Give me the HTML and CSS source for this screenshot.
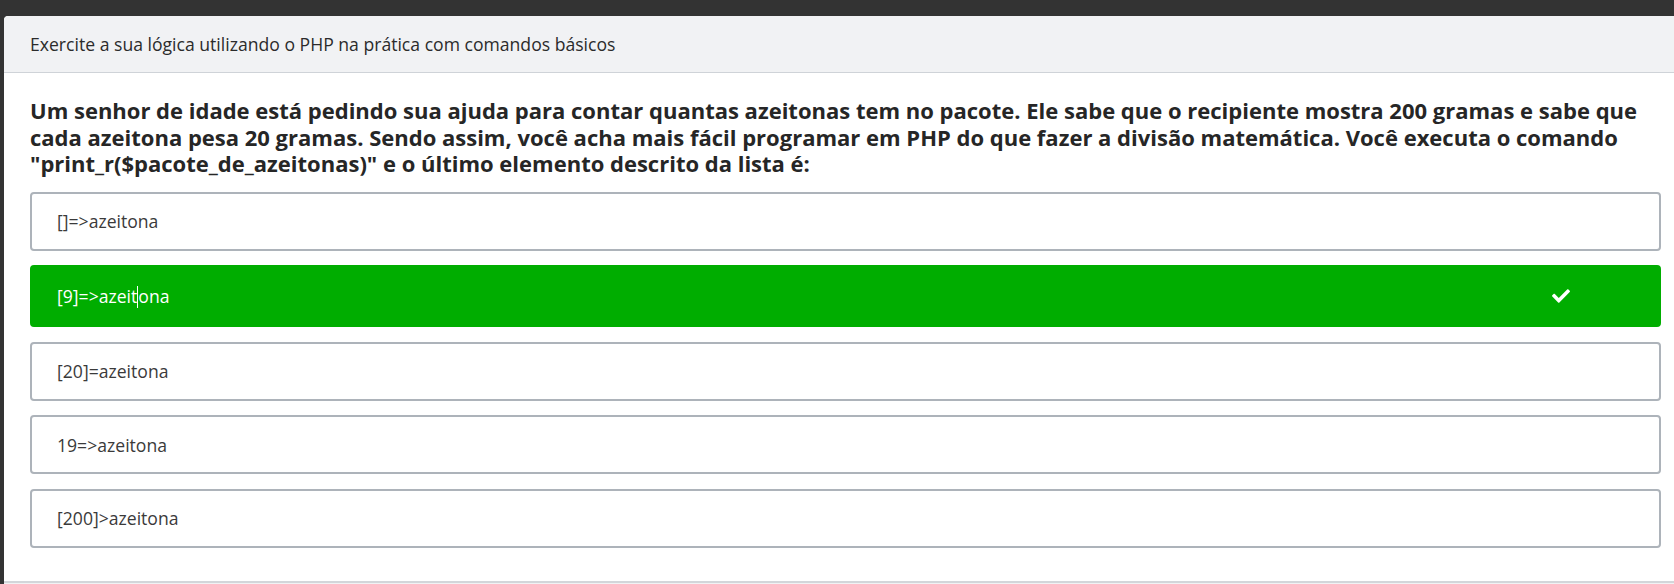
FILE: index.html
```html
<!DOCTYPE html>
<html lang="pt">
<head>
<meta charset="utf-8">
<title>Exercício PHP</title>
<link rel="stylesheet" href="styles.css">
</head>
<body>
<div class="card">
  <div class="card-header">Exercite a sua lógica utilizando o PHP na prática com comandos básicos</div>
  <div class="card-body">
    <p class="question">Um senhor de idade está pedindo sua ajuda para contar quantas azeitonas tem no pacote. Ele sabe que o recipiente mostra 200 gramas e sabe que cada azeitona pesa 20 gramas. Sendo assim, você acha mais fácil programar em PHP do que fazer a divisão matemática. Você executa o comando "print_r($pacote_de_azeitonas)" e o último elemento descrito da lista é:</p>
    <ul class="options">
      <li class="option">[]=&gt;azeitona</li>
      <li class="option correct"><span>[9]=&gt;azeit<span class="caret"></span>ona</span>
        <svg class="check" viewBox="0 0 512 400" width="18" height="14" aria-hidden="true"><path fill="#fff" d="M173.9 383.4l-166.4-166.4c-10-10-10-26.2 0-36.2l36.2-36.2c10-10 26.2-10 36.2 0L192 256.7 432.1 16.6c10-10 26.2-10 36.2 0l36.2 36.2c10 10 10 26.2 0 36.2l-294.4 294.4c-10 10-26.2 10-36.2 0z"/></svg>
      </li>
      <li class="option">[20]=azeitona</li>
      <li class="option">19=&gt;azeitona</li>
      <li class="option">[200]&gt;azeitona</li>
    </ul>
  </div>
  <div class="card-footer"></div>
</div>
</body>
</html>
```

FILE: styles.css
```css
html, body {
  margin: 0;
  padding: 0;
  background: #333333;
  overflow: hidden;
  height: 584px;
}
body {
  font-family: "Open Sans", "Liberation Sans", sans-serif;
  color: #333;
  padding: 16px 0 0 4px;
  box-sizing: border-box;
}
.card {
  width: 1683px;
  background: #fff;
  border-radius: 4px 4px 0 0;
  height: 568px;
  overflow: hidden;
}
.card-header {
  background: #f1f2f4;
  border-bottom: 1px solid #cfd3d8;
  height: 57px;
  box-sizing: border-box;
  padding: 0 26px;
  display: flex;
  align-items: center;
  font-size: 17.6px;
  color: #2b2b2b;
  border-radius: 4px 4px 0 0;
}
.card-body {
  padding: 24px 26px 0 26px;
  height: 508px;
  box-sizing: border-box;
}
.question {
  margin: 0 0 15px 0;
  font-size: 22px;
  font-weight: 700;
  line-height: 26.5px;
  color: #262626;
  padding-right: 20px;
}
.options {
  list-style: none;
  margin: 0;
  padding: 0;
  display: flex;
  flex-direction: column;
  gap: 14.5px;
}
.option {
  height: 59px;
  box-sizing: border-box;
  border: 2px solid #adb3ba;
  border-radius: 4px;
  padding: 0 25px;
  display: flex;
  align-items: center;
  justify-content: space-between;
  font-size: 17.6px;
  color: #3a3a3a;
}
.option.correct {
  background: #00ad00;
  border-color: #00ad00;
  color: #fff;
  height: 62px;
  padding-right: 89px;
}
.caret {
  display: inline-block;
  width: 1px;
  height: 22px;
  background: #fff;
  vertical-align: -5px;
}
.check {
  display: block;
}
.card-footer {
  border-top: 2px solid #d3d6da;
  background: #f1f2f4;
  height: 1px;
}
```
